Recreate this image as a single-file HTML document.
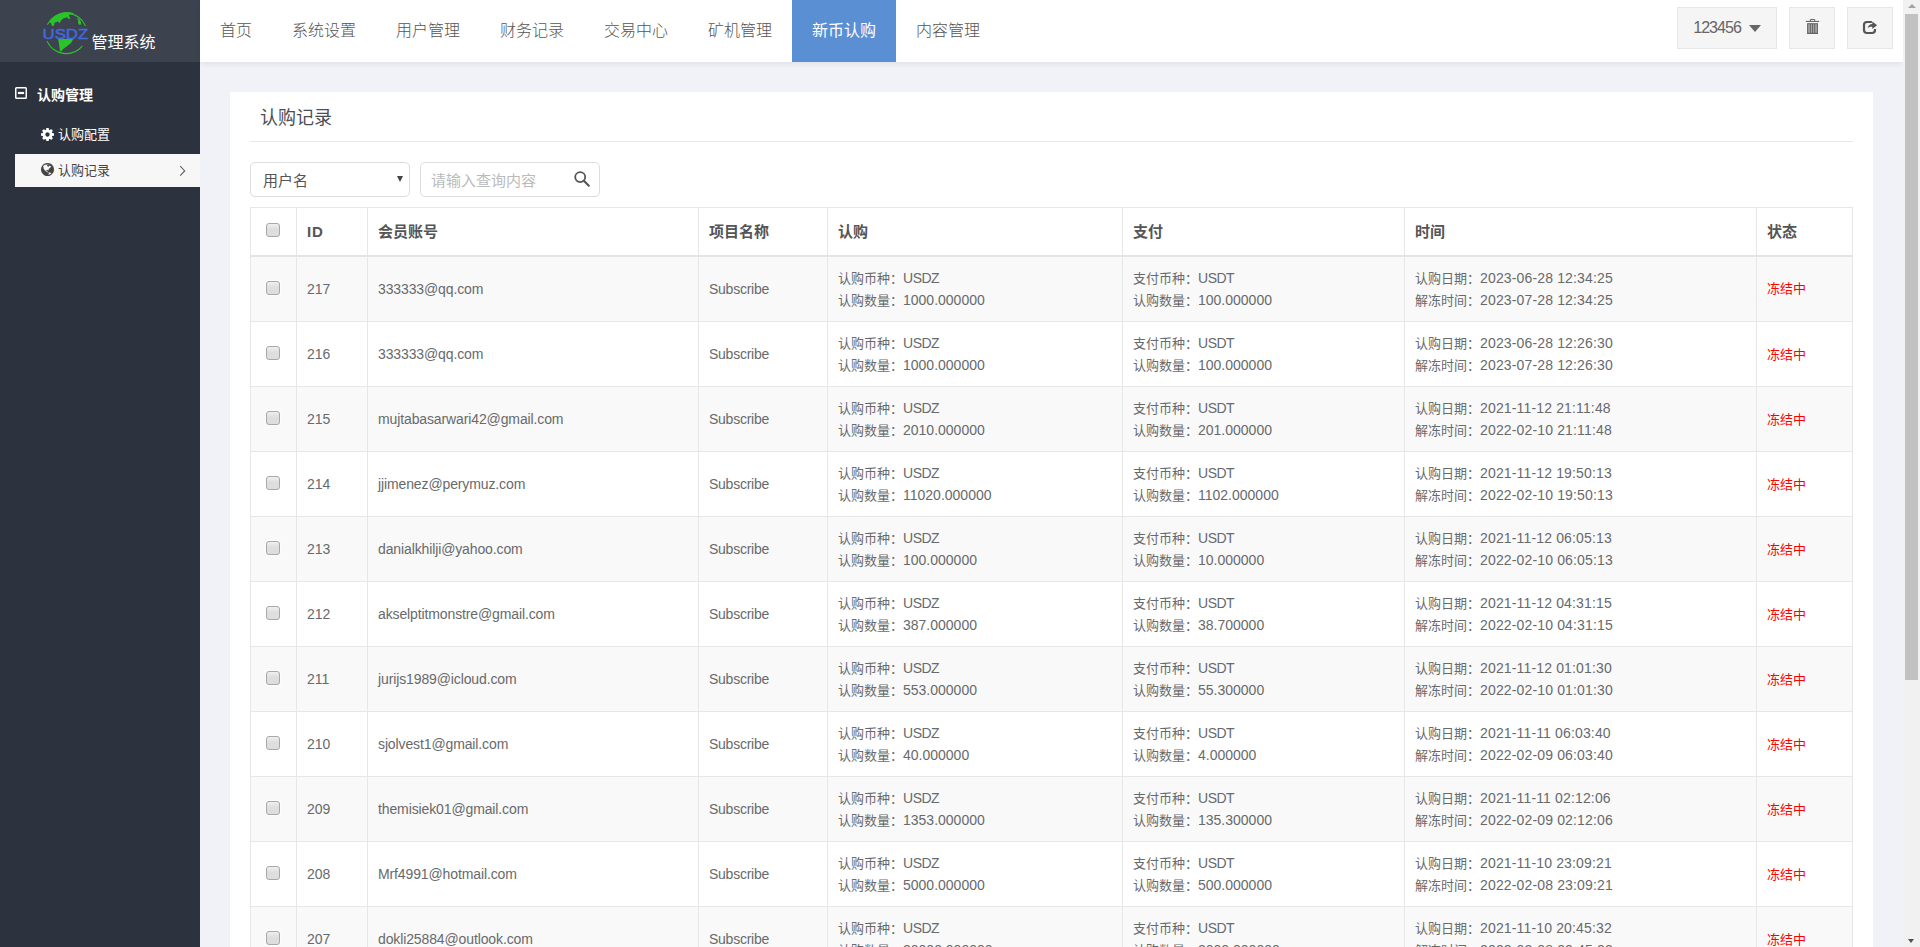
<!DOCTYPE html>
<html lang="zh-CN">
<head>
<meta charset="utf-8">
<title>认购记录 - USDZ管理系统</title>
<style>
*{box-sizing:border-box;margin:0;padding:0}
html,body{width:1920px;height:947px;overflow:hidden;background:#f0f2f7}
body{position:relative;font-family:"Liberation Sans","Noto Sans CJK SC",sans-serif;font-size:14px;color:#676a6c}
/* sidebar */
#side{position:absolute;left:0;top:0;width:200px;height:947px;background:#2d323f}
#logo{position:absolute;left:0;top:0;width:200px;height:62px;background:#3d434e}
#logo svg{position:absolute;left:36px;top:6px}
#logo .nm{position:absolute;left:91.5px;top:32.3px;font-size:16px;line-height:22px;color:#fff;letter-spacing:0}
.grp{position:absolute;left:37px;top:84px;font-size:14px;line-height:22px;font-weight:bold;color:#fff}
.grpico{position:absolute;left:14px;top:86px}
.mi{position:absolute;left:15px;width:185px;height:33px;font-size:13px;line-height:33px;color:#fff}
.mi .t{position:absolute;left:43px;top:0}
.mi svg{position:absolute;left:26px;top:10px}
.mi.act{background:#f7f7f7;color:#444}
.mi svg.chev{position:absolute;left:164px;top:11.5px}
/* top */
#top{position:absolute;left:200px;top:0;width:1703px;height:62px;background:#fff;box-shadow:0 2px 5px rgba(0,0,0,.07)}
#top .nav a{position:absolute;top:0;height:62px;line-height:61px;font-size:16px;font-weight:300;color:#555;text-align:center;text-decoration:none}
#top .nav a.on{background:#5b8fd3;color:#fff;font-weight:400}
.tb{position:absolute;top:7px;height:42px;background:#f5f5f5;border:1px solid #e7e7e7}
.un{position:absolute;left:15.2px;top:9.2px;font-size:16px;line-height:22px;color:#666;letter-spacing:-.95px}
.car{position:absolute;left:71px;top:17px;border-left:6px solid transparent;border-right:6px solid transparent;border-top:7.5px solid #666}
/* scrollbar */
#sb{position:absolute;left:1903px;top:0;width:17px;height:947px;background:#f1f1f1}
#sb .th{position:absolute;left:2px;top:14px;width:13px;height:666px;background:#c1c1c1}
#sb .up{position:absolute;left:4.5px;top:4px;width:0;height:0;border-left:4px solid transparent;border-right:4px solid transparent;border-bottom:4.3px solid #a3a3a3}
#sb .dn{position:absolute;left:5px;top:939px;width:0;height:0;border-left:3.5px solid transparent;border-right:3.5px solid transparent;border-top:4px solid #505050}
/* card */
#card{position:absolute;left:230px;top:92px;width:1643px;height:900px;background:#fff}
#card h2{position:absolute;left:30px;top:12px;font-size:18px;font-weight:normal;line-height:28px;color:#4a4d55}
#card .hr{position:absolute;left:20px;top:49px;width:1603px;height:1px;background:#e7eaec}
.sel{position:absolute;left:20px;top:70px;width:160px;height:35px;border:1px solid #ddd;border-radius:5px;background:#fff;font-size:15px;line-height:35px;padding-left:12px;color:#555}
.sel:after{content:"";position:absolute;left:146px;top:13px;border-left:3.5px solid transparent;border-right:3.5px solid transparent;border-top:6px solid #444}
.inp{position:absolute;left:190px;top:70px;width:180px;height:35px;border:1px solid #ddd;border-radius:5px;background:#fff;font-size:15px;line-height:35px;padding-left:10px;color:#bbb}
.inp svg{position:absolute;left:152px;top:7px}
/* table */
table{position:absolute;left:20px;top:115px;width:1602px;border-collapse:collapse;table-layout:fixed;font-size:14px;color:#676a6c}
th,td{border:1px solid #e7e7e7;padding:0 10px;text-align:left;vertical-align:middle;line-height:22px}
th{height:48px;padding-top:2px;font-size:15px;font-weight:bold;color:#555;border-bottom:2px solid #e4e4e4;background:#fff}
td{height:65px}
tbody tr:first-child td{height:66px}
tbody tr:first-child .cb{top:-.5px}
thead .cb{top:-2.5px}
tbody tr:nth-child(odd) td{background:#f9f9f9}
td .l{font-size:13px;line-height:1;letter-spacing:0}
td.sub{letter-spacing:-.25px}
td.em{letter-spacing:-.12px}
td.tm{letter-spacing:.15px}
td.st{font-size:13px;color:#f00;padding-top:1px}
td .c{letter-spacing:-.5px}
.cb{display:block;width:14px;height:14px;margin:0 auto;border:1px solid #a8a8a8;border-radius:3px;background:linear-gradient(#f0f0f0,#dedede 45%,#dedede);position:relative;left:-1px;top:-1.5px;box-shadow:0 0 0 1px rgba(255,255,255,.6)}
</style>
</head>
<body>
<div id="side">
  <div id="logo">
    <svg width="60" height="54" viewBox="0 0 60 54">
      <g fill="none" stroke="#2ac32a" stroke-width="1.1" stroke-linecap="round">
        <path d="M11.6 18.3A21 21 0 0 1 49.4 19.6"/>
        <path d="M11.2 35.6A21 21 0 0 0 46 40.4"/>
      </g>
      <g fill="#2ac32a">
        <path d="M13.2 15.6A21 21 0 0 1 37.6 7.3L36.2 8.9L34.6 8.1L32.8 9.4L34.3 12.5L33 13.3L31 11.3L27.2 12.6L24.8 14.8L23.7 17.3L22 15.5L18.6 16.8L17.9 19.8L16 20L15 17.3Z"/>
        <path d="M40.7 11.9L43 12.7L44.6 15L45.3 18.2L43.6 19.1L42 17L42.3 14.6Z"/>
        <path d="M22 33.1L37.4 33.1L35 37L31 40.2L27.2 43L25.6 45.3L24 45L23.2 40L22.7 36Z"/>
      </g>
      <text x="6.6" y="33.1" font-family="Liberation Sans, sans-serif" font-weight="normal" stroke="#4169e1" stroke-width=".45" font-size="14.6" fill="#4169e1" textLength="45.6" lengthAdjust="spacingAndGlyphs">USDZ</text>
    </svg>
    <div class="nm">管理系统</div>
  </div>
  <svg class="grpico" width="14" height="14" viewBox="0 0 14 14"><rect x="1.75" y="1.75" width="10.5" height="10.5" rx=".8" fill="none" stroke="#fff" stroke-width="1.5"/><rect x="3.9" y="5.9" width="6.2" height="2.2" fill="#fff"/></svg>
  <div class="grp">认购管理</div>
  <div class="mi" style="top:118px"><svg width="13" height="13" viewBox="0 0 1536 1536"><path fill="currentColor" d="M1024 768q0-106-75-181t-181-75-181 75-75 181 75 181 181 75 181-75 75-181zm512-109v222q0 12-8 23t-20 13l-185 28q-19 54-39 91 35 50 107 138 10 12 10 25t-9 23q-27 37-99 108t-94 71q-12 0-26-9l-138-108q-44 23-91 38-16 136-29 186-7 28-36 28h-222q-14 0-24.500-8.500t-11.500-21.500l-28-184q-49-16-90-37l-141 107q-10 9-25 9-14 0-25-11-126-114-165-168-7-10-7-23 0-12 8-23 15-21 51-66.500t54-70.500q-27-50-41-99l-183-27q-13-2-21-12.500t-8-23.500v-222q0-12 8-23t19-13l186-28q14-46 39-92-40-57-107-138-10-12-10-24 0-10 9-23 26-36 98.500-107.500t94.500-71.500q13 0 26 10l138 107q44-23 91-38 16-136 29-186 7-28 36-28h222q14 0 24.500 8.500t11.500 21.500l28 184q49 16 90 37l142-107q9-9 24-9 13 0 25 10 129 119 165 170 7 8 7 22 0 12-8 23-15 21-51 66.500t-54 70.500q26 50 41 98l183 28q13 2 21 12.500t8 23.500z"/></svg><span class="t">认购配置</span></div>
  <div class="mi act" style="top:154px"><svg style="top:9px" width="13" height="13" viewBox="0 0 1536 1536"><path fill="currentColor" d="M768 0q209 0 385.500 103t279.500 279.500 103 385.500-103 385.500-279.500 279.500-385.500 103-385.500-103-279.500-279.500-103-385.500 103-385.500 279.500-279.500 385.500-103zm274 521q-2 1-9.500 9.500t-13.500 9.500q2 0 4.500-5t5-11 3.500-7q6-7 22-15 14-6 52-12 34-8 51 11-2-2 9.500-13t14.500-12q3-2 15-4.500t15-7.500l2-22q-12 1-17.500-7t-6.500-21q0 2-6 8 0-7-4.500-8t-11.500 1-9 1q-10-3-15-7.500t-8-16.500-4-15q-2-5-9.500-11t-9.500-10q-1-2-2.500-5.500t-3-6.500-4-5.500-5.500-2.500-7 5-7.500 10-4.500 5q-3-2-6-1.500t-4.500 1-4.500 3-5 3.500q-3 2-8.500 3t-8.500 2q15-5-1-11-10-4-16-3 9-4 7.500-12t-8.500-14h5q-1-4-8.500-8.500t-17.500-8.500-13-6q-8-5-34-9.500t-33-.5q-5 6-4.500 10.500t4 14 3.500 12.500q1 6-5.500 13t-6.500 12q0 7 14 15.500t10 21.500q-3 8-16 16t-16 12q-5 8-1.500 18.500t10.500 16.500q2 2 1.500 4t-3.500 4.500-5.500 4-6.500 3.500l-3 2q-11 5-20.500-6t-13.500-26q-7-25-16-30-23-8-29 1-5-13-41-26-25-9-58-4 6-1 0-15-7-15-19-12 3-6 4-17.500t1-13.500q3-13 12-23 1-1 7-8.500t9.500-13.500.5-6q35 4 50-11 5-5 11.500-17t10.500-17q9-6 14-5.500t14.500 5.500 14.500 5q14 1 15.500-11t-7.500-20q12 1 3-17-4-7-8-9-12-4-27 5-8 4 2 8-1-1-9.500 10.500t-16.500 17.500-16-5q-1-1-5.500-13.500t-9.500-13.500q-8 0-16 15 3-8-11-15t-24-8q19-12-8-27-7-4-20.500-5t-19.500 4q-5 7-5.500 11.500t5 8 10.500 5.500 11.500 4 8.500 3q14 10 8 14-2 1-8.500 3.500t-11.500 4.500-6 4q-3 4 0 14t-2 14q-5-5-9-17.500t-7-16.500q7 9-25 6l-10-1q-4 0-16 2t-20.500 1-13.500-8q-4-8 0-20 1-4 4-2-4-3-11-9.500t-10-8.500q-46 15-94 41 6 1 12-1 5-2 13-6.500t10-5.500q34-14 42-7l5-5q14 16 20 25-7-4-30-1-20 6-22 12 7 12 5 18-4-3-11.500-10t-14.500-11-15-5q-16 0-22 1-146 80-235 222 7 7 12 8 4 1 5 9t2.500 11 11.500-3q9 8 3 19 1-1 44 27 19 17 21 21 3 11-10 18-1-2-9-9t-9-4q-3 5 .5 18.500t10.500 12.500q-7 0-9.500 16t-2.500 35.500-1 23.500l2 1q-3 12 5.500 34.500t21.500 19.500q-13 3 20 43 6 8 8 9 3 2 12 7.500t15 10 10 10.500q4 5 10 22.500t14 23.500q-2 6 9.500 20t10.500 23q-1 0-2.500 1t-2.500 1q3 7 15.500 14t15.500 13q1 3 2 10t3 11 8 2q2-20-24-62-15-25-17-29-3-5-5.500-15.500t-4.500-14.500q2 0 6 1.500t8.500 3.500 7.500 4 2 3q-3 7 2 17.500t12 18.500 17 19 12 13q6 6 14 19.500t0 13.500q9 0 20 10t17 20q5 8 8 26t5 24q2 7 8.500 13.500t12.500 9.500l16 8 13 7q5 2 18.500 10.500t21.500 11.500q10 4 16 4t14.500-2.500 13.500-3.500q15-2 29 15t21 21q36 19 55 11-2 1 .5 7.500t8 15.500 9 14.500 5.500 8.500q5 6 18 15t18 15q6-4 7-9-3 8 7 20t18 10q14-3 14-32-31 15-49-18 0-1-2.500-5.500t-4-8.500-2.500-8.500 0-7.500 5-3q9 0 10-3.500t-2-12.500-4-13q-1-8-11-20t-12-15q-5 9-16 8t-16-9q0 1-1.500 5.500t-1.500 6.500q-13 0-15-1 1-3 2.500-17.500t3.500-22.500q1-4 5.500-12t7.500-14.500 4-12.500-4.500-9.500-17.500-2.500q-19 1-26 20-1 3-3 10.500t-5 11.500-9 7q-7 3-24 2t-24-5q-13-8-22.500-29t-9.500-37q0-10 2.500-26.500t3-25-5.500-24.500q3-2 9-9.500t10-10.500q2-1 4.500-1.500t4.500 0 4-1.500 3-6q-1-1-4-3-3-3-4-3 7 3 28.500-1.500t27.500 1.500q15 11 22-2 0-1-2.500-9.500t-.5-13.500q5 27 29 9 3 3 15.500 5t17.500 5q3 2 7 5.500t5.500 4.500 5-.5 8.500-6.500q10 14 12 24 11 40 19 44 7 3 11 2t4.500-9.500 0-14-1.500-12.500l-1-8v-18l-1-8q-15-3-18.500-12t1.500-18.500 15-18.500q1-1 8-3.500t15.500-6.500 12.500-8q21-19 15-35 7 0 11-9-1 0-5-3t-7.500-5-4.500-2q9-5 2-16 5-3 7.500-11t7.500-10q9 12 21 2 7-8 1-16 5-7 20.500-10.500t18.500-9.500q7 2 8-2t1-12 3-12q4-5 15-9t13-5l17-11q3-4 0-4 18 2 31-11 10-11-6-20 3-6-3-9.500t-15-5.500q3-1 11.500-.5t10.500-1.500q15-10-7-16-17-5-43 12zm-163 877q206-36 351-189-3-3-12.500-4.500t-12.500-3.500q-18-7-24-8 1-7-2.500-13t-8-9-12.500-8-11-7q-2-2-7-6t-7-5.500-7.500-4.500-8.500-2-10 1l-3 1q-3 1-5.500 2.500t-5.500 3-4 3 0 2.500q-21-17-36-22-5-1-11-5.500t-10.500-7-10-1.500-11.500 7q-5 5-6 15t-2 13q-7-5 0-17.500t2-18.500q-3-6-10.500-4.500t-12 4.500-11.500 8.500-9 6.500-8.500 5.500-8.500 7.500q-3 4-6 12t-5 11q-2-4-11.500-6.500t-9.500-5.500q2 10 4 35t5 38q7 31-12 48-27 25-29 40-4 22 12 26 0 7-8 20.500t-7 21.500q0 6 2 16z"/></svg><span class="t">认购记录</span><svg class="chev" width="7" height="12" viewBox="0 0 7 12" style="left:164.4px;top:10.8px"><path d="M1.2 1.2L5.7 5.9L1.2 10.6" fill="none" stroke="#666" stroke-width="1.2"/></svg></div>
</div>
<div id="top">
  <div class="nav">
    <a style="left:0;width:72px">首页</a>
    <a style="left:72px;width:104px">系统设置</a>
    <a style="left:176px;width:104px">用户管理</a>
    <a style="left:280px;width:104px">财务记录</a>
    <a style="left:384px;width:104px">交易中心</a>
    <a style="left:488px;width:104px">矿机管理</a>
    <a class="on" style="left:592px;width:104px">新币认购</a>
    <a style="left:696px;width:104px">内容管理</a>
  </div>
  <div class="tb" style="left:1477px;width:100px"><span class="un">123456</span><i class="car"></i></div>
  <div class="tb" style="left:1589px;width:46px"><svg width="46" height="42" viewBox="0 0 46 42" style="position:absolute;left:-1px;top:-1px">
      <path d="M21.3 14.2V12.5H25.7V14.2" fill="none" stroke="#666" stroke-width="1"/>
      <rect x="16.9" y="13.9" width="13.3" height="1.1" fill="#666"/>
      <rect x="18.1" y="16.2" width="10.9" height="10.7" rx="1" fill="#aaa"/>
      <path d="M18.7 16.2V26.9M21.4 17V26M23.55 17V26M25.7 17V26M28.4 16.2V26.9M18.1 16.7H29M18.1 26.4H29" stroke="#666" stroke-width="1.1" fill="none"/>
    </svg></div>
  <div class="tb" style="left:1647px;width:46px"><svg width="46" height="42" viewBox="0 0 46 42" style="position:absolute;left:-1px;top:-1px">
      <path d="M24.9 15H20A3 3 0 0 0 17 18V23A3 3 0 0 0 20 26H25A3 3 0 0 0 28 23V22" fill="none" stroke="#555" stroke-width="2.2"/>
      <path d="M30.1 18.3L25.3 14.6V16.9C22.6 17 21.2 18.6 20.6 21.3C22 19.9 23.4 19.6 25.3 19.7V22Z" fill="#555"/>
    </svg></div>
</div>
<div id="card">
  <h2>认购记录</h2>
  <div class="hr"></div>
  <div class="sel">用户名</div>
  <div class="inp">请输入查询内容<svg width="18" height="18" viewBox="0 0 18 18"><circle cx="7.2" cy="7.1" r="5" fill="none" stroke="#555" stroke-width="1.8"/><path d="M10.9 10.8L15.8 15.7" stroke="#555" stroke-width="2.1" stroke-linecap="round"/></svg></div>
  <table>
    <colgroup><col style="width:46px"><col style="width:71px"><col style="width:331px"><col style="width:129px"><col style="width:295px"><col style="width:282px"><col style="width:352px"><col style="width:96px"></colgroup>
    <thead><tr><th><i class="cb"></i></th><th style="letter-spacing:.8px">ID</th><th>会员账号</th><th>项目名称</th><th>认购</th><th>支付</th><th>时间</th><th>状态</th></tr></thead>
    <tbody id="tb">
    <tr><td><i class="cb"></i></td><td>217</td><td class="em">333333@qq.com</td><td class="sub">Subscribe</td><td><span class="l">认购币种：</span><span class="c">USDZ</span><br><span class="l">认购数量：</span>1000.000000</td><td><span class="l">支付币种：</span><span class="c">USDT</span><br><span class="l">认购数量：</span>100.000000</td><td class="tm"><span class="l">认购日期：</span>2023-06-28 12:34:25<br><span class="l">解冻时间：</span>2023-07-28 12:34:25</td><td class="st">冻结中</td></tr>
    <tr><td><i class="cb"></i></td><td>216</td><td class="em">333333@qq.com</td><td class="sub">Subscribe</td><td><span class="l">认购币种：</span><span class="c">USDZ</span><br><span class="l">认购数量：</span>1000.000000</td><td><span class="l">支付币种：</span><span class="c">USDT</span><br><span class="l">认购数量：</span>100.000000</td><td class="tm"><span class="l">认购日期：</span>2023-06-28 12:26:30<br><span class="l">解冻时间：</span>2023-07-28 12:26:30</td><td class="st">冻结中</td></tr>
    <tr><td><i class="cb"></i></td><td>215</td><td class="em">mujtabasarwari42@gmail.com</td><td class="sub">Subscribe</td><td><span class="l">认购币种：</span><span class="c">USDZ</span><br><span class="l">认购数量：</span>2010.000000</td><td><span class="l">支付币种：</span><span class="c">USDT</span><br><span class="l">认购数量：</span>201.000000</td><td class="tm"><span class="l">认购日期：</span>2021-11-12 21:11:48<br><span class="l">解冻时间：</span>2022-02-10 21:11:48</td><td class="st">冻结中</td></tr>
    <tr><td><i class="cb"></i></td><td>214</td><td class="em">jjimenez@perymuz.com</td><td class="sub">Subscribe</td><td><span class="l">认购币种：</span><span class="c">USDZ</span><br><span class="l">认购数量：</span>11020.000000</td><td><span class="l">支付币种：</span><span class="c">USDT</span><br><span class="l">认购数量：</span>1102.000000</td><td class="tm"><span class="l">认购日期：</span>2021-11-12 19:50:13<br><span class="l">解冻时间：</span>2022-02-10 19:50:13</td><td class="st">冻结中</td></tr>
    <tr><td><i class="cb"></i></td><td>213</td><td class="em">danialkhilji@yahoo.com</td><td class="sub">Subscribe</td><td><span class="l">认购币种：</span><span class="c">USDZ</span><br><span class="l">认购数量：</span>100.000000</td><td><span class="l">支付币种：</span><span class="c">USDT</span><br><span class="l">认购数量：</span>10.000000</td><td class="tm"><span class="l">认购日期：</span>2021-11-12 06:05:13<br><span class="l">解冻时间：</span>2022-02-10 06:05:13</td><td class="st">冻结中</td></tr>
    <tr><td><i class="cb"></i></td><td>212</td><td class="em">akselptitmonstre@gmail.com</td><td class="sub">Subscribe</td><td><span class="l">认购币种：</span><span class="c">USDZ</span><br><span class="l">认购数量：</span>387.000000</td><td><span class="l">支付币种：</span><span class="c">USDT</span><br><span class="l">认购数量：</span>38.700000</td><td class="tm"><span class="l">认购日期：</span>2021-11-12 04:31:15<br><span class="l">解冻时间：</span>2022-02-10 04:31:15</td><td class="st">冻结中</td></tr>
    <tr><td><i class="cb"></i></td><td>211</td><td class="em">jurijs1989@icloud.com</td><td class="sub">Subscribe</td><td><span class="l">认购币种：</span><span class="c">USDZ</span><br><span class="l">认购数量：</span>553.000000</td><td><span class="l">支付币种：</span><span class="c">USDT</span><br><span class="l">认购数量：</span>55.300000</td><td class="tm"><span class="l">认购日期：</span>2021-11-12 01:01:30<br><span class="l">解冻时间：</span>2022-02-10 01:01:30</td><td class="st">冻结中</td></tr>
    <tr><td><i class="cb"></i></td><td>210</td><td class="em">sjolvest1@gmail.com</td><td class="sub">Subscribe</td><td><span class="l">认购币种：</span><span class="c">USDZ</span><br><span class="l">认购数量：</span>40.000000</td><td><span class="l">支付币种：</span><span class="c">USDT</span><br><span class="l">认购数量：</span>4.000000</td><td class="tm"><span class="l">认购日期：</span>2021-11-11 06:03:40<br><span class="l">解冻时间：</span>2022-02-09 06:03:40</td><td class="st">冻结中</td></tr>
    <tr><td><i class="cb"></i></td><td>209</td><td class="em">themisiek01@gmail.com</td><td class="sub">Subscribe</td><td><span class="l">认购币种：</span><span class="c">USDZ</span><br><span class="l">认购数量：</span>1353.000000</td><td><span class="l">支付币种：</span><span class="c">USDT</span><br><span class="l">认购数量：</span>135.300000</td><td class="tm"><span class="l">认购日期：</span>2021-11-11 02:12:06<br><span class="l">解冻时间：</span>2022-02-09 02:12:06</td><td class="st">冻结中</td></tr>
    <tr><td><i class="cb"></i></td><td>208</td><td class="em">Mrf4991@hotmail.com</td><td class="sub">Subscribe</td><td><span class="l">认购币种：</span><span class="c">USDZ</span><br><span class="l">认购数量：</span>5000.000000</td><td><span class="l">支付币种：</span><span class="c">USDT</span><br><span class="l">认购数量：</span>500.000000</td><td class="tm"><span class="l">认购日期：</span>2021-11-10 23:09:21<br><span class="l">解冻时间：</span>2022-02-08 23:09:21</td><td class="st">冻结中</td></tr>
    <tr><td><i class="cb"></i></td><td>207</td><td class="em">dokli25884@outlook.com</td><td class="sub">Subscribe</td><td><span class="l">认购币种：</span><span class="c">USDZ</span><br><span class="l">认购数量：</span>20000.000000</td><td><span class="l">支付币种：</span><span class="c">USDT</span><br><span class="l">认购数量：</span>2000.000000</td><td class="tm"><span class="l">认购日期：</span>2021-11-10 20:45:32<br><span class="l">解冻时间：</span>2022-02-08 20:45:32</td><td class="st">冻结中</td></tr>
    </tbody>
  </table>
</div>
<div id="sb"><div class="up"></div><div class="th"></div><div class="dn"></div></div>
</body>
</html>
